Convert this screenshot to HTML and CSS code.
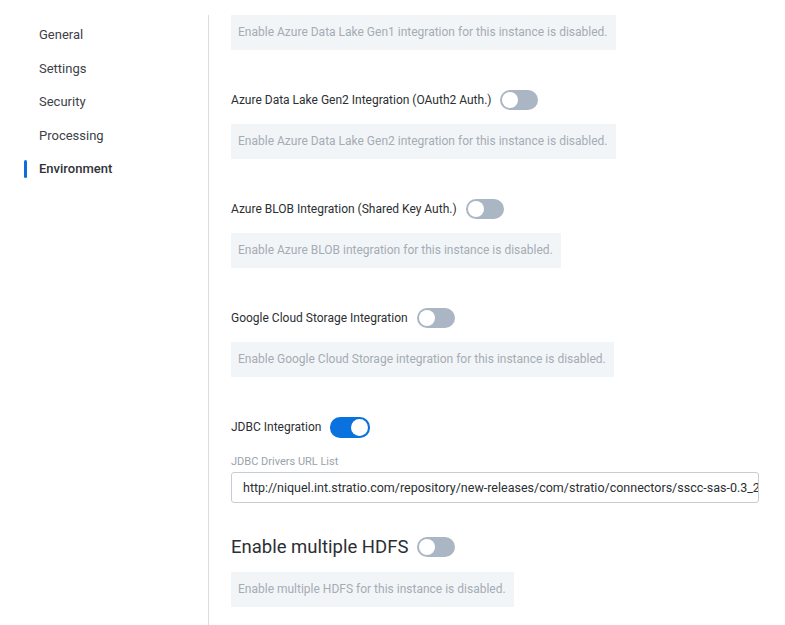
FILE: index.html
```html
<!DOCTYPE html>
<html>
<head>
<meta charset="utf-8">
<link rel="stylesheet" href="styles.css">
</head>
<body>
<div class="page">
  <nav class="sidebar">
    <div class="nav-item">General</div>
    <div class="nav-item">Settings</div>
    <div class="nav-item">Security</div>
    <div class="nav-item">Processing</div>
    <div class="nav-item active">Environment</div>
  </nav>
  <main class="content">
    <div class="info first">Enable Azure Data Lake Gen1 integration for this instance is disabled.</div>

    <section class="section">
      <div class="row"><span class="label">Azure Data Lake Gen2 Integration (OAuth2 Auth.)</span><span class="toggle"></span></div>
      <div class="info">Enable Azure Data Lake Gen2 integration for this instance is disabled.</div>
    </section>

    <section class="section">
      <div class="row"><span class="label">Azure BLOB Integration (Shared Key Auth.)</span><span class="toggle"></span></div>
      <div class="info">Enable Azure BLOB integration for this instance is disabled.</div>
    </section>

    <section class="section">
      <div class="row"><span class="label">Google Cloud Storage Integration</span><span class="toggle"></span></div>
      <div class="info">Enable Google Cloud Storage integration for this instance is disabled.</div>
    </section>

    <section class="section">
      <div class="row"><span class="label">JDBC Integration</span><span class="toggle on"></span></div>
      <div class="field-label">JDBC Drivers URL List</div>
      <div class="input">http://niquel.int.stratio.com/repository/new-releases/com/stratio/connectors/sscc-sas-0.3_2.11-spark-3.0.0.jar</div>
    </section>

    <section class="section hdfs">
      <div class="row big"><span class="label">Enable multiple HDFS</span><span class="toggle"></span></div>
      <div class="info">Enable multiple HDFS for this instance is disabled.</div>
    </section>
  </main>
</div>
</body>
</html>
```

FILE: styles.css
```css
html, body {
  margin: 0;
  padding: 0;
  background: #ffffff;
  font-family: Roboto, "Liberation Sans", sans-serif;
  color: #2b2f33;
}
.page {
  display: flex;
  height: 625px;
  overflow: hidden;
}
.sidebar {
  width: 208px;
  flex: none;
  padding-top: 25px;
  box-sizing: border-box;
}
.nav-item {
  position: relative;
  height: 20px;
  line-height: 20px;
  margin-bottom: 13.5px;
  padding-left: 39px;
  font-size: 13px;
  color: #3d4247;
}
.nav-item.active {
  font-weight: 500;
  color: #2f3337;
}
.nav-item.active::before {
  content: "";
  position: absolute;
  left: 24px;
  top: 1px;
  width: 3px;
  height: 18px;
  border-radius: 2px;
  background: #0a6fdb;
}
.content {
  flex: 1;
  margin-top: 15px;
  border-left: 1px solid #d9dee4;
  padding-left: 22px;
  min-width: 0;
}
.info {
  height: 35px;
  line-height: 35px;
  padding: 0 8px 0 7px;
  background: #f2f5f8;
  color: #a4acb4;
  font-size: 12px;
  white-space: nowrap;
  width: fit-content;
}
.section {
  margin-top: 40px;
}
.row {
  display: flex;
  align-items: center;
  gap: 9px;
  height: 20px;
  margin-bottom: 14px;
}
.label {
  font-size: 12px;
  color: #2b2f33;
}
.row.big {
  height: 24px;
  margin-bottom: 13px;
}
.row.big .label {
  font-size: 18.5px;
}
.hdfs {
  margin-top: 32px;
}
.toggle {
  position: relative;
  flex: none;
  width: 38px;
  height: 20px;
  border-radius: 10px;
  background: #aab6c3;
}
.toggle::after {
  content: "";
  position: absolute;
  left: 2px;
  top: 2px;
  width: 16px;
  height: 16px;
  border-radius: 50%;
  background: #ffffff;
}
.toggle.on {
  width: 40px;
  height: 21px;
  background: #0a72de;
}
.toggle.on::after {
  left: auto;
  right: 2px;
  top: 2px;
  width: 17px;
  height: 17px;
}
.field-label {
  font-size: 11px;
  color: #9aa2aa;
  padding-top: 4px;
  margin-bottom: 3px;
  height: 14px;
  line-height: 14px;
}
.input {
  width: 528px;
  height: 31px;
  box-sizing: border-box;
  border: 1px solid #c6cdd5;
  border-radius: 3px;
  padding: 0 11px;
  line-height: 29px;
  font-size: 12.5px;
  color: #2b2f33;
  white-space: nowrap;
  overflow: hidden;
}
```
